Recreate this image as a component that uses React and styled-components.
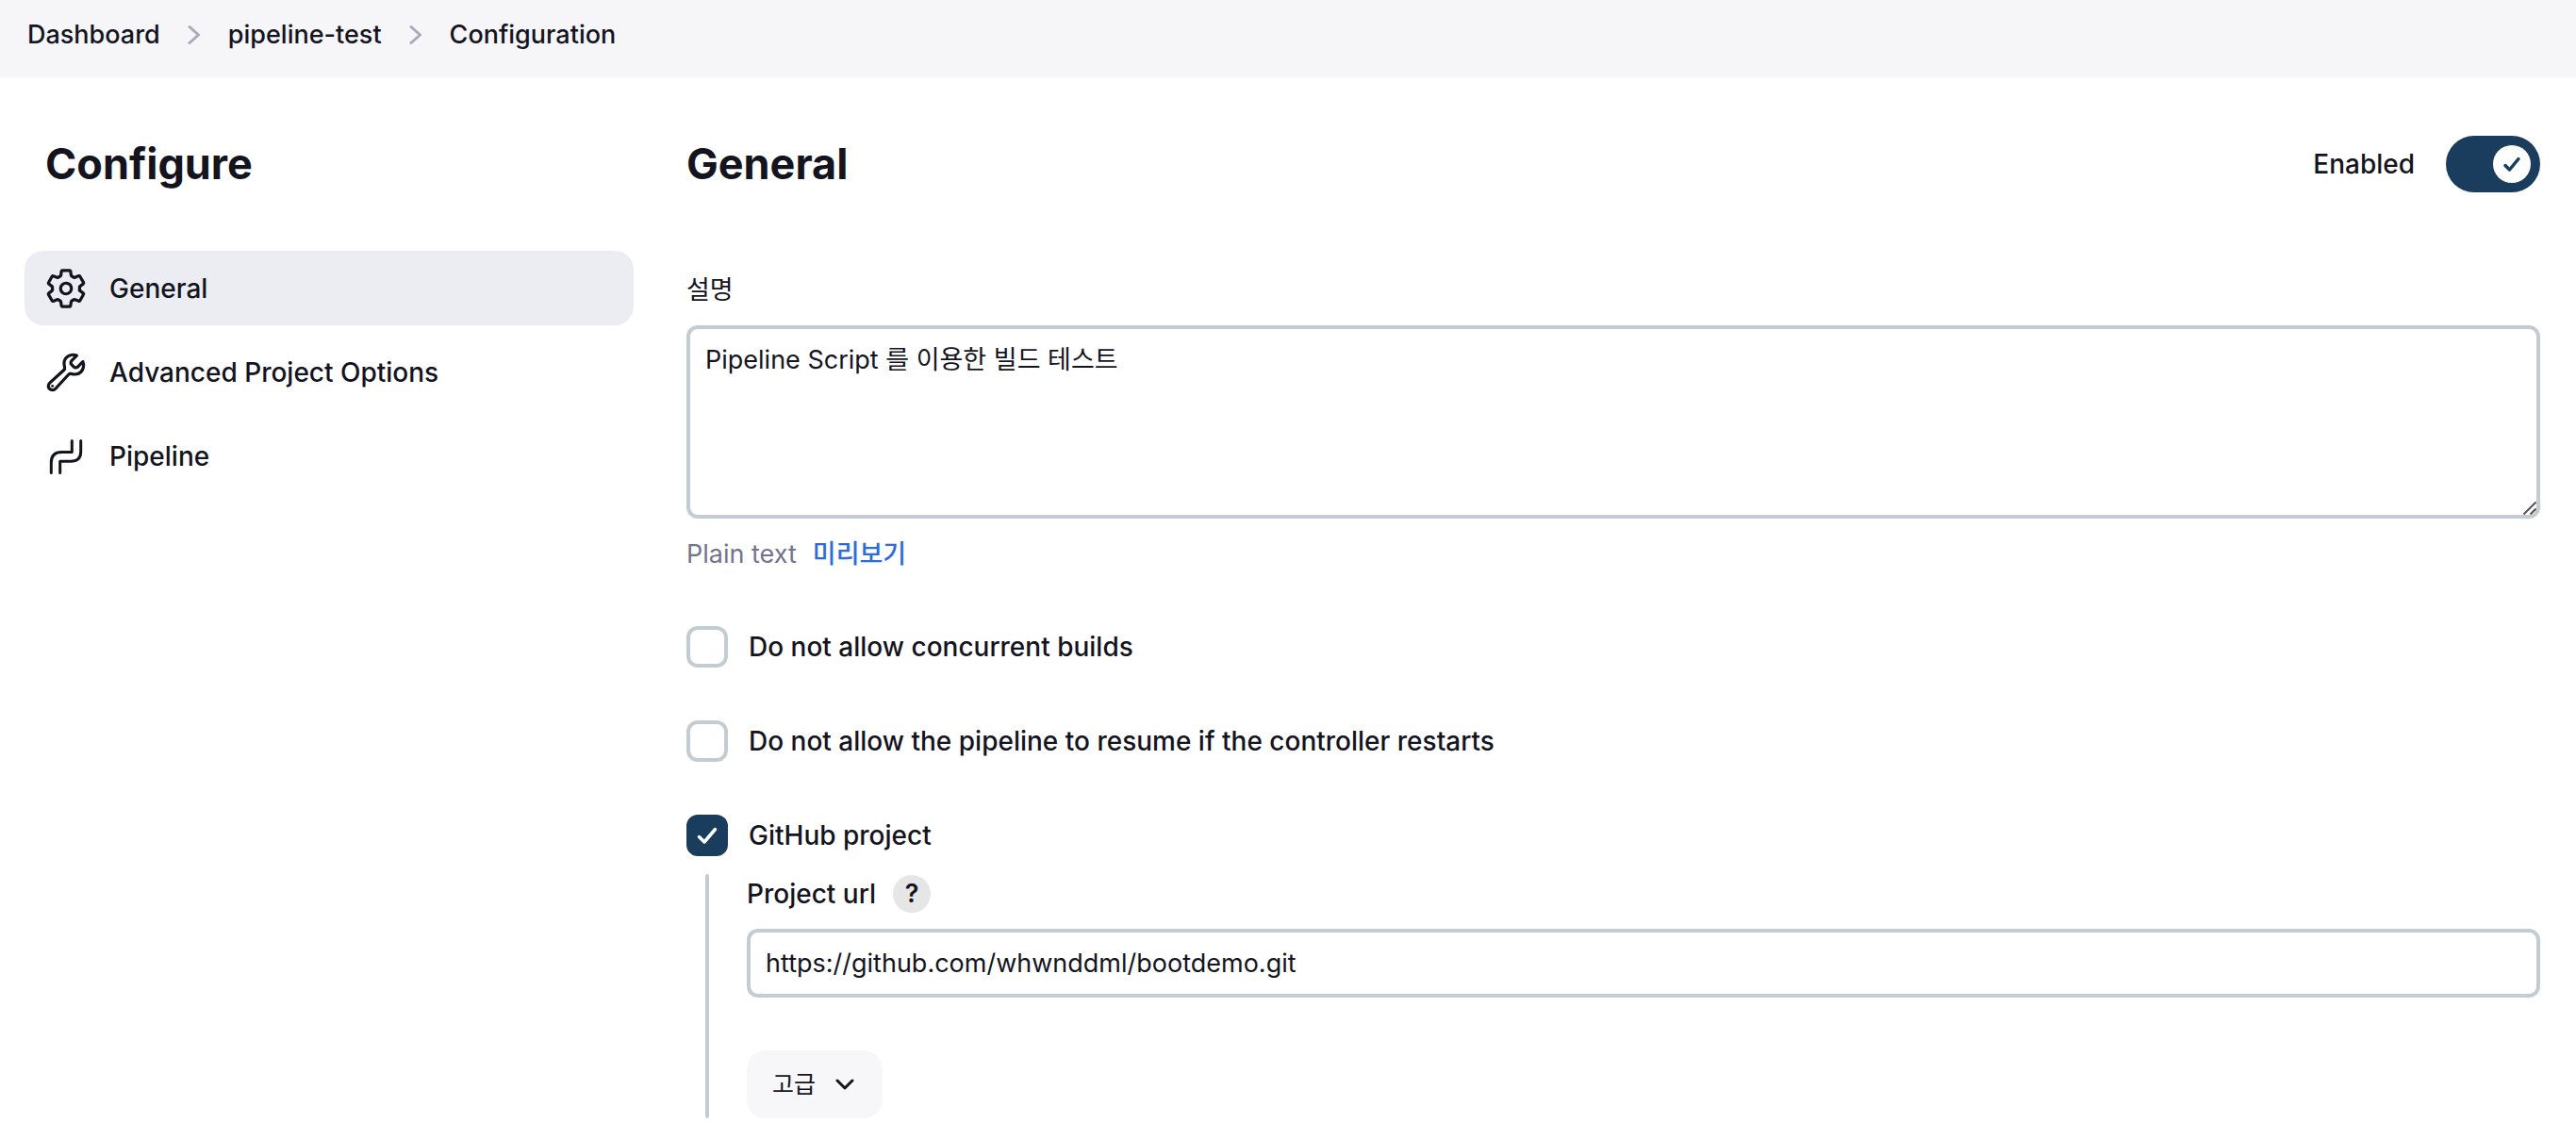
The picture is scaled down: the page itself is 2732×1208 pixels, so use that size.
import React, {useState} from 'react';
import styled, {createGlobalStyle, css} from 'styled-components';
import {IoBuildOutline, IoSettingsOutline} from 'react-icons/io5';

const GlobalStyle = createGlobalStyle`
*, *::before, *::after {
    box-sizing: border-box;
}
body {
    margin: 0;
    background: #FFF;
    color: #14141F;
    font-family: Inter, 'Noto Sans CJK KR', sans-serif;
    font-size: 27px;
    line-height: 40px;
}
button, input, textarea {
    font: inherit;
    color: inherit;
}
`;

const Header = styled.nav`
background: #F6F6F9;
height: 82px;
padding: 17px 29px;
`;

const Crumbs = styled.ol`
display: flex;
align-items: center;
gap: 29px;
margin: 0;
padding: 0;
list-style: none;
`;

const Crumb = styled.li`
display: flex;
align-items: center;
gap: 29px;
`;

const CrumbLink = styled.a`
color: inherit;
font-weight: 500;
text-decoration: none;
`;

const Page = styled.div`
display: flex;
padding: 62px 38px 22px 26px;
gap: 56px;
`;

const SidePanel = styled.aside`
flex: 0 0 646px;
`;

const Title = styled.h1`
margin: 0;
font-size: 45px;
line-height: 60px;
font-weight: 700;
`;

const SideTitle = styled(Title)`
padding: 0 22px;
margin-bottom: 62px;
`;

const Tasks = styled.div`
display: flex;
flex-direction: column;
gap: 10px;
`;

const Task = styled.a`
display: flex;
align-items: center;
gap: 23px;
height: 79px;
padding: 0 21px;
border-radius: 20px;
color: inherit;
font-size: 28px;
font-weight: 500;
text-decoration: none;
background: ${props => props.$active ? '#ECEDF3' : 'transparent'};
& svg {
    width: 46px;
    height: 46px;
}
& svg[viewBox='0 0 512 512'] path {
    stroke-width: 36px;
}
`;

const Main = styled.main`
flex: 1;
min-width: 0;
`;

const TitleBar = styled.div`
display: flex;
align-items: center;
justify-content: space-between;
margin-bottom: 84px;
`;

const ToggleLabel = styled.label`
display: flex;
align-items: center;
gap: 33px;
font-size: 28px;
font-weight: 500;
`;

const Overlay = styled.span`
display: grid;
align-items: center;
& > * {
    grid-area: 1 / 1;
}
& > svg {
    pointer-events: none;
}
`;

const ToggleInput = styled.input`
appearance: none;
display: flex;
width: 100px;
height: 60px;
margin: 0;
padding: 10px;
border-radius: 30px;
background: #A7B0B8;
&::before {
    content: '';
    width: 40px;
    height: 40px;
    border-radius: 50%;
    background: #FFF;
}
&:checked {
    justify-content: flex-end;
    background: #1A3D5D;
}
`;

const ToggleMark = styled.svg`
width: 40px;
height: 40px;
margin-right: 10px;
justify-self: end;
`;

const FieldLabel = styled.label`
display: block;
font-size: ${props => props.$korean ? '27px' : '28px'};
font-weight: ${props => props.$korean ? 400 : 500};
`;

const box = css`
display: block;
width: 100%;
margin: 0;
padding: 0 16px;
border: 4px solid #C3CCD1;
border-radius: 12px;
background: #FFF;
outline: none;
`;

const TextArea = styled.textarea`
${box}
height: 205px;
margin-top: 17px;
padding-top: 13px;
resize: vertical;
&::-webkit-scrollbar {
    width: 18px;
    height: 18px;
}
&::-webkit-resizer {
    background: url("data:image/svg+xml,%3Csvg xmlns='http://www.w3.org/2000/svg' width='18' height='18' fill='none' stroke='%23555' stroke-width='2'%3E%3Cpath d='M3 16L16 3M10 16L16 10'/%3E%3C/svg%3E") no-repeat center;
}
`;

const TextInput = styled.input`
${box}
height: 73px;
margin-top: 17px;
`;

const Hint = styled.div`
display: flex;
gap: 17px;
margin: 18px 0 56px;
color: #73738C;
`;

const PreviewLink = styled.a`
color: #2B6DDC;
font-weight: 500;
text-decoration: none;
`;

const CheckRow = styled.label`
display: flex;
align-items: center;
gap: 22px;
font-size: 28px;
font-weight: 500;
& + & {
    margin-top: 56px;
}
`;

const CheckInput = styled.input`
appearance: none;
width: 44px;
height: 44px;
margin: 0;
border: 4px solid #C3CCD1;
border-radius: 12px;
&:checked {
    border-color: #1A3D5D;
    background: #1A3D5D;
}
`;

const CheckMark = styled.svg`
width: 44px;
height: 44px;
`;

const Nested = styled.div`
display: flex;
gap: 40px;
margin: 19px 0 0 20px;
&::before {
    content: '';
    width: 4px;
    border-radius: 2px;
    background: #C3CCD1;
}
`;

const NestedBody = styled.div`
flex: 1;
min-width: 0;
padding-top: 1px;
`;

const LabelRow = styled.div`
display: flex;
align-items: center;
gap: 18px;
`;

const HelpButton = styled.button`
width: 40px;
height: 40px;
padding: 0;
border: 0;
border-radius: 50%;
background: #E6E6E6;
font-weight: 600;
`;

const AdvancedButton = styled.button`
display: flex;
align-items: center;
gap: 21px;
height: 72px;
margin-top: 56px;
padding: 0 30px 0 27px;
border: 0;
border-radius: 20px;
background: #F7F7FA;
font-size: 25px;
font-weight: 400;
`;

const CrumbArrow = () => (
    <svg width='14' height='24' viewBox='0 0 14 24' fill='none' stroke='#A9A9BC' strokeWidth='3' strokeLinecap='round' strokeLinejoin='round'>
        <path d='M2 3.500l9.500 8.500L2 20.500' />
    </svg>
);

const PipelineIcon = () => (
    <svg viewBox='0 0 46 46' fill='none' stroke='currentColor' strokeWidth='3' strokeLinecap='round' strokeLinejoin='round'>
        <path d='M29.300 6.500v12H18.500Q7.300 18.500 7.300 29.500V40.500' />
        <path d='M38.700 6.500v11.500Q38.700 28.200 28 28.200H16.700V40.500' />
    </svg>
);

const Check = ({label, checked}) => {
    const [on, setOn] = useState(checked);

    return (
        <CheckRow>
            <Overlay>
                <CheckInput type='checkbox' checked={on} onChange={() => setOn(!on)} />
                {on && (
                    <CheckMark viewBox='0 0 44 44' fill='none' stroke='#FFF' strokeWidth='3.5' strokeLinecap='round' strokeLinejoin='round'>
                        <path d='M13.500 23.500l5.500 5.500L30.500 15.500' />
                    </CheckMark>
                )}
            </Overlay>
            {label}
        </CheckRow>
    );
};

const App = () => {
    const [enabled, setEnabled] = useState(true);

    return (
        <>
            <GlobalStyle />
            <Header>
                <Crumbs>
                    <Crumb><CrumbLink href='#dashboard'>Dashboard</CrumbLink><CrumbArrow /></Crumb>
                    <Crumb><CrumbLink href='#job'>pipeline-test</CrumbLink><CrumbArrow /></Crumb>
                    <Crumb><CrumbLink href='#configure'>Configuration</CrumbLink></Crumb>
                </Crumbs>
            </Header>
            <Page>
                <SidePanel>
                    <SideTitle>Configure</SideTitle>
                    <Tasks>
                        <Task href='#general' $active><IoSettingsOutline />General</Task>
                        <Task href='#advanced'><IoBuildOutline />Advanced Project Options</Task>
                        <Task href='#pipeline'><PipelineIcon />Pipeline</Task>
                    </Tasks>
                </SidePanel>
                <Main>
                    <TitleBar>
                        <Title as='h2'>General</Title>
                        <ToggleLabel>
                            Enabled
                            <Overlay>
                                <ToggleInput type='checkbox' checked={enabled} onChange={() => setEnabled(!enabled)} />
                                {enabled && (
                                    <ToggleMark viewBox='0 0 40 40' fill='none' stroke='#1A3D5D' strokeWidth='3.5' strokeLinecap='round' strokeLinejoin='round'>
                                        <path d='M13 21.500l4.500 4.500L27 14.500' />
                                    </ToggleMark>
                                )}
                            </Overlay>
                        </ToggleLabel>
                    </TitleBar>
                    <FieldLabel htmlFor='description' $korean>설명</FieldLabel>
                    <TextArea id='description' defaultValue='Pipeline Script 를 이용한 빌드 테스트' />
                    <Hint>
                        <span>Plain text</span>
                        <PreviewLink href='#preview'>미리보기</PreviewLink>
                    </Hint>
                    <Check label='Do not allow concurrent builds' checked={false} />
                    <Check label='Do not allow the pipeline to resume if the controller restarts' checked={false} />
                    <Check label='GitHub project' checked />
                    <Nested>
                        <NestedBody>
                            <LabelRow>
                                <FieldLabel htmlFor='project-url'>Project url</FieldLabel>
                                <HelpButton type='button'>?</HelpButton>
                            </LabelRow>
                            <TextInput id='project-url' type='text' defaultValue='https://github.com/whwnddml/bootdemo.git' />
                            <AdvancedButton type='button'>
                                고급
                                <svg width='20' height='14' viewBox='0 0 20 14' fill='none' stroke='currentColor' strokeWidth='3' strokeLinecap='round' strokeLinejoin='round'>
                                    <path d='M2 3l8 8 8-8' />
                                </svg>
                            </AdvancedButton>
                        </NestedBody>
                    </Nested>
                </Main>
            </Page>
        </>
    );
};

export default App;
